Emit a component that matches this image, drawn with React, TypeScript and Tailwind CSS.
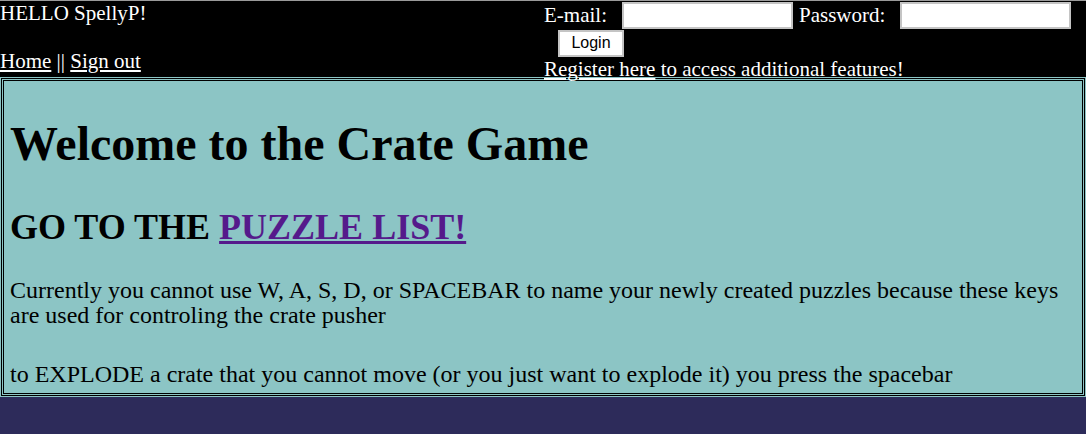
import React from "react";

export default function App() {
  const serif = { fontFamily: '"Liberation Serif", "Times New Roman", serif' } as React.CSSProperties;
  return (
    <div className="w-[1086px] h-[434px] bg-[#2d2b5a] overflow-hidden" style={serif}>
      <header className="h-[77px] bg-black text-white grid grid-cols-2 border-t border-[#9a9a9a]">
        <div className="text-[21px] leading-[24px]">
          <div>HELLO SpellyP!</div>
          <div className="mt-[24px]">
            <a href="#" className="underline text-white">Home</a>
            <span> || </span>
            <a href="#" className="underline text-white">Sign out</a>
          </div>
        </div>
        <div className="text-[21px] leading-[24px]">
          <div className="flex items-center h-[28px]">
            <span className="ml-[1px]">E-mail:</span>
            <input className="ml-[15px] w-[171px] h-[27px] bg-white border-2 border-[#c4c4c4] outline-none" />
            <span className="ml-[6px]">Password:</span>
            <input className="ml-[15px] w-[171px] h-[27px] bg-white border-2 border-[#c4c4c4] outline-none" />
          </div>
          <div className="h-[28px] flex items-center">
            <button
              className="ml-[15px] w-[66px] h-[27px] bg-white border-2 border-[#c4c4c4] text-black text-[16px] leading-none"
              style={{ fontFamily: '"Liberation Sans", Arial, sans-serif' }}
            >
              Login
            </button>
          </div>
          <div className="ml-[1px]">
            <a href="#" className="underline text-white">Register here</a>
            <span> to access additional features!</span>
          </div>
        </div>
      </header>
      <div className="bg-[#8cc5c5] p-px">
        <div className="border-[3px] border-double border-black bg-[#8cc5c5] px-[6px] text-black h-[318px]">
          <h1 className="mt-[35px] text-[48px] leading-[55px] font-bold">Welcome to the Crate Game</h1>
          <h2 className="mt-[36px] text-[36px] leading-[41px] font-bold">
            GO TO THE <a href="#" className="underline text-[#551a8b]">PUZZLE LIST!</a>
          </h2>
          <p className="mt-[30px] text-[24px] leading-[25px]">
            Currently you cannot use W, A, S, D, or SPACEBAR to name your newly created puzzles because these keys are used for controling the crate pusher
          </p>
          <p className="mt-[34px] text-[24px] leading-[25px]">
            to EXPLODE a crate that you cannot move (or you just want to explode it) you press the spacebar
          </p>
        </div>
      </div>
    </div>
  );
}
